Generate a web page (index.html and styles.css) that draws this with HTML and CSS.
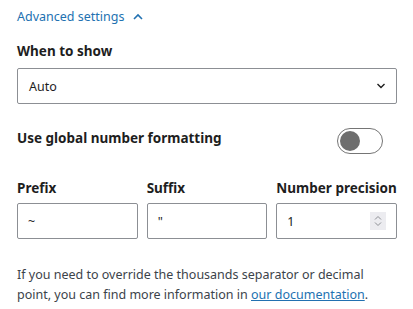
FILE: index.html
```html
<!DOCTYPE html>
<html lang="en">
<head>
    <meta charset="UTF-8">
    <title>Advanced settings</title>
    <link rel="stylesheet" href="styles.css">
</head>
<body>
    <div class="panel">
        <button class="advanced-toggle">
            Advanced settings
            <svg width="10" height="7" viewBox="0 0 10 7"><path d="M1 6 L5 2 L9 6" fill="none" stroke="#2271b1" stroke-width="1.6"/></svg>
        </button>

        <div class="field">
            <label class="field-label">When to show</label>
            <div class="select-box">
                <span>Auto</span>
                <svg width="10" height="6" viewBox="0 0 10 6"><path d="M1.5 1 L5 4.5 L8.5 1" fill="none" stroke="#1e1e1e" stroke-width="1.4"/></svg>
            </div>
        </div>

        <div class="switch-row">
            <span class="field-label">Use global number formatting</span>
            <span class="switch"><span class="knob"></span></span>
        </div>

        <div class="format-grid">
            <div class="field">
                <label class="field-label">Prefix</label>
                <div class="text-input">~</div>
            </div>
            <div class="field">
                <label class="field-label">Suffix</label>
                <div class="text-input">"</div>
            </div>
            <div class="field">
                <label class="field-label">Number precision</label>
                <div class="text-input number">
                    <span>1</span>
                    <span class="spinner">
                        <svg width="8" height="12" viewBox="0 0 8 12"><path d="M1 4.5 L4 1.5 L7 4.5 M1 7.5 L4 10.5 L7 7.5" fill="none" stroke="#8c8f94" stroke-width="1"/></svg>
                    </span>
                </div>
            </div>
        </div>

        <p class="help">
            If you need to override the thousands separator or decimal point, you can find more information in <a href="#">our documentation</a>.
        </p>
    </div>
</body>
</html>
```

FILE: styles.css
```css
* {
    margin: 0;
    padding: 0;
    box-sizing: border-box;
}

body {
    background: #ffffff;
    font-family: 'Noto Sans', sans-serif;
    color: #1e1e1e;
}

.panel {
    width: 380px;
    margin-left: 17px;
    padding-top: 6px;
}

/* Toggle link */
.advanced-toggle {
    display: flex;
    align-items: center;
    gap: 9px;
    background: none;
    border: none;
    color: #2271b1;
    font-family: inherit;
    font-size: 12.5px;
    height: 20px;
    cursor: pointer;
}

.field {
    display: flex;
    flex-direction: column;
}

.field-label {
    font-size: 13.5px;
    font-weight: 700;
    color: #1e1e1e;
    line-height: 20px;
    white-space: nowrap;
}

.panel > .field {
    margin-top: 15px;
}

.panel > .field .field-label {
    margin-bottom: 7px;
}

.select-box {
    height: 36px;
    border: 1px solid #8c8f94;
    border-radius: 2px;
    display: flex;
    align-items: center;
    justify-content: space-between;
    padding: 0 10px 0 11px;
    font-size: 12.5px;
}

/* Switch */
.switch-row {
    display: flex;
    align-items: flex-start;
    justify-content: space-between;
    margin-top: 24px;
    padding-right: 14px;
}

.switch {
    width: 46px;
    height: 26px;
    border: 1px solid #757575;
    border-radius: 13px;
    display: flex;
    align-items: center;
    padding-left: 2px;
}

.knob {
    width: 20px;
    height: 20px;
    border-radius: 50%;
    background: #6e6e6e;
}

/* Prefix / Suffix / Precision */
.format-grid {
    display: grid;
    grid-template-columns: repeat(3, 1fr);
    gap: 9px;
    margin-top: 24px;
}

.format-grid .field-label {
    margin-bottom: 5px;
}

.text-input {
    height: 36px;
    border: 1px solid #8c8f94;
    border-radius: 2px;
    display: flex;
    align-items: center;
    padding: 0 10px;
    font-size: 12.5px;
}

.text-input.number {
    justify-content: space-between;
    padding-right: 10px;
}

.spinner {
    width: 16px;
    height: 18px;
    background: #ececf0;
    display: flex;
    align-items: center;
    justify-content: center;
}

.help {
    margin-top: 26px;
    font-size: 12.5px;
    line-height: 20px;
    color: #3c434a;
}

.help a {
    color: #2271b1;
}
```
